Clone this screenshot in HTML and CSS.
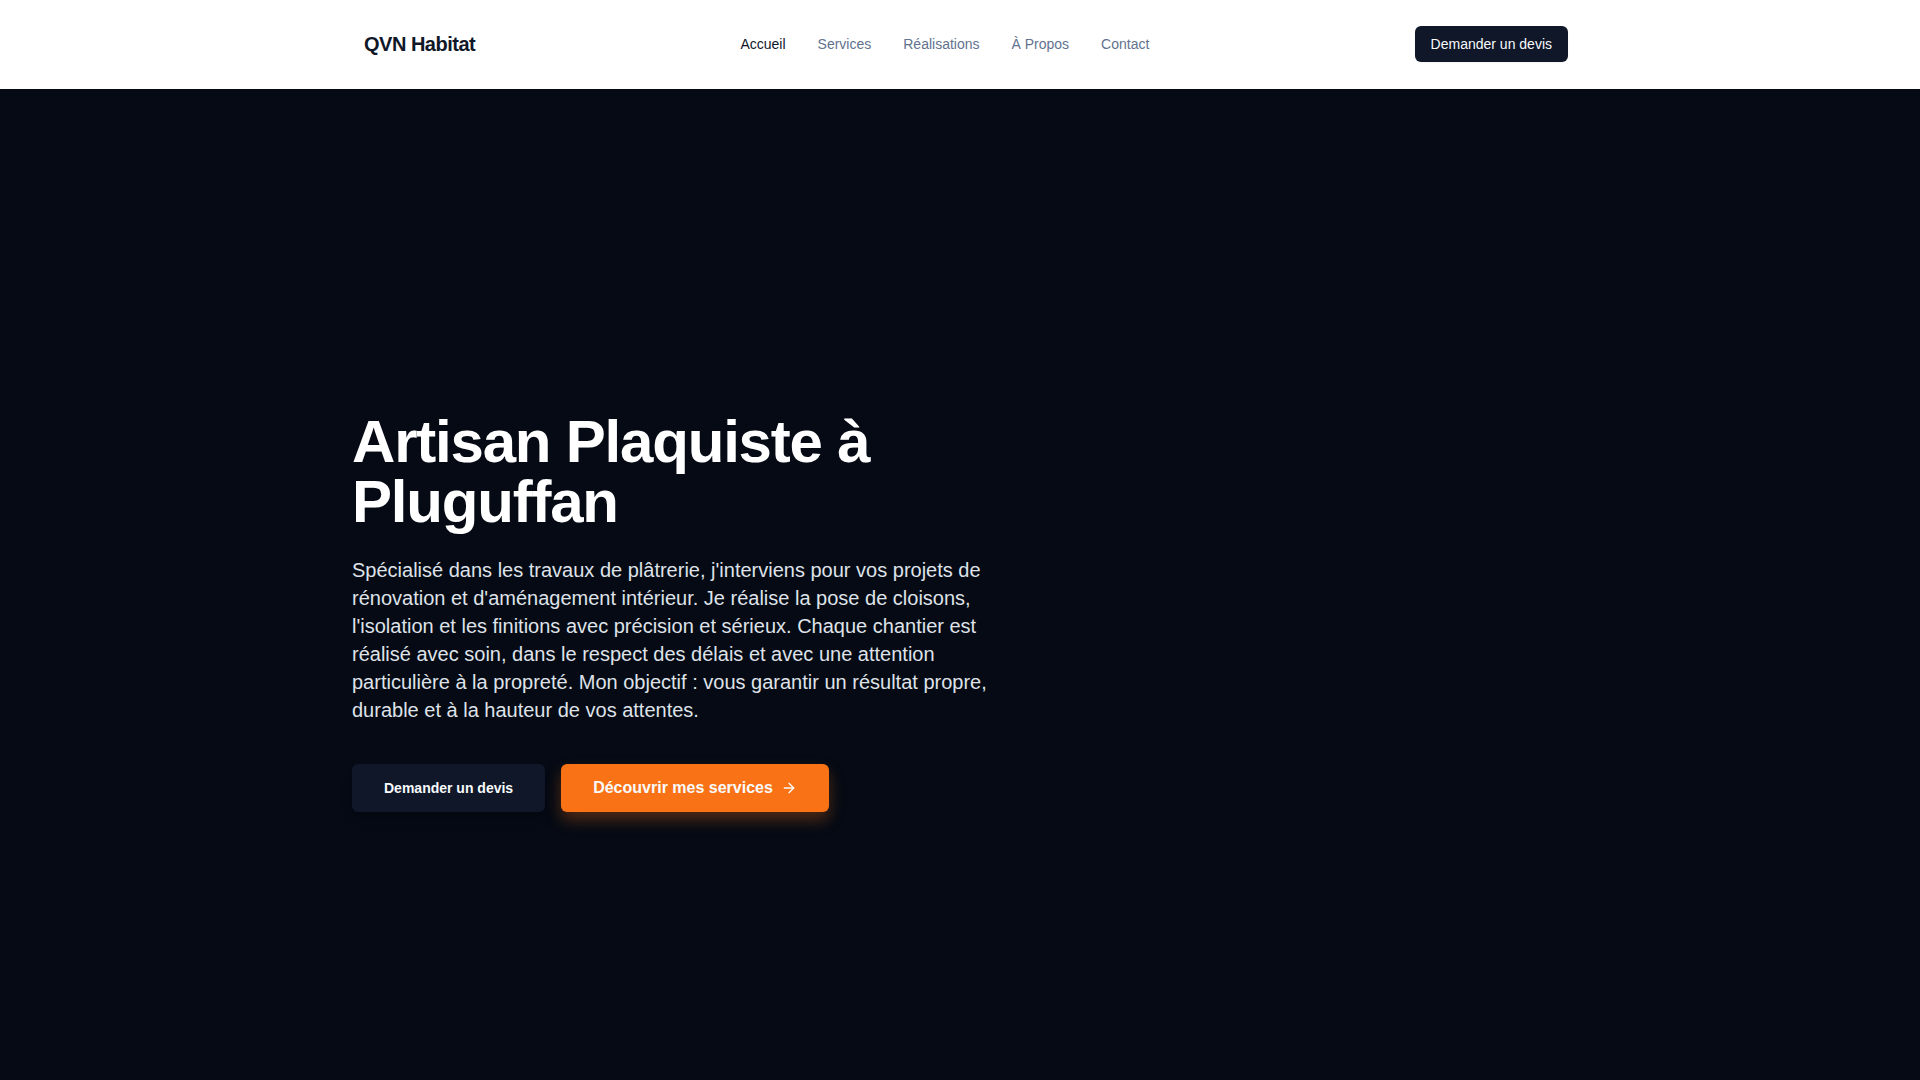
FILE: index.html
```
<!DOCTYPE html>
<html lang="fr">
<head>
  <meta charset="UTF-8">
  <meta name="viewport" content="width=device-width, initial-scale=1">
  <title>QVN Habitat</title>
  <link rel="stylesheet" href="styles.css">
</head>
<body>
  <header class="header">
    <div class="container header-inner">
      <a class="logo" href="#">QVN Habitat</a>
      <nav class="nav">
        <a class="nav-link active" href="#">Accueil</a>
        <a class="nav-link" href="#services">Services</a>
        <a class="nav-link" href="#realisations">Réalisations</a>
        <a class="nav-link" href="#a-propos">À Propos</a>
        <a class="nav-link" href="#contact">Contact</a>
      </nav>
      <button class="btn btn-small" type="button">Demander un devis</button>
    </div>
  </header>

  <main class="hero">
    <div class="container">
      <div class="hero-content">
        <h1 class="hero-title">Artisan Plaquiste à Pluguffan</h1>
        <p class="hero-text">Spécialisé dans les travaux de plâtrerie, j'interviens pour vos projets de rénovation et d'aménagement intérieur. Je réalise la pose de cloisons, l'isolation et les finitions avec précision et sérieux. Chaque chantier est réalisé avec soin, dans le respect des délais et avec une attention particulière à la propreté. Mon objectif : vous garantir un résultat propre, durable et à la hauteur de vos attentes.</p>
        <div class="hero-actions">
          <button class="btn btn-large" type="button">Demander un devis</button>
          <button class="btn btn-large btn-orange" type="button">
            Découvrir mes services
            <svg class="icon" viewBox="0 0 24 24" aria-hidden="true">
              <path d="M5 12h14"/>
              <path d="m12 5 7 7-7 7"/>
            </svg>
          </button>
        </div>
      </div>
    </div>
  </main>
</body>
</html>
```

FILE: styles.css
```
* {
  box-sizing: border-box;
}

body {
  margin: 0;
  min-height: 100vh;
  display: flex;
  flex-direction: column;
  font-family: "Liberation Sans", Arial, sans-serif;
  background-color: #050a14;
  color: #0f1729;
}

.container {
  width: 100%;
  max-width: 1280px;
  margin: 0 auto;
  padding: 0 32px;
}

/* Header */
.header {
  background-color: #fff;
  border-bottom: 1px solid #fff;
}

.header-inner {
  display: flex;
  align-items: center;
  justify-content: space-between;
  min-height: 88px;
}

.logo {
  padding-left: 12px;
  font-size: 20px;
  line-height: 28px;
  font-weight: bold;
  letter-spacing: -0.025em;
  color: #0f1729;
  text-decoration: none;
}

.nav {
  display: flex;
  gap: 32px;
}

.nav-link {
  font-size: 14px;
  line-height: 20px;
  color: #62728f;
  text-decoration: none;
}

.nav-link:hover,
.nav-link.active {
  color: #0f1729;
}

/* Buttons */
.btn {
  display: inline-flex;
  align-items: center;
  justify-content: center;
  gap: 8px;
  border: none;
  border-radius: 6px;
  background-color: #0f1729;
  color: #f8fafc;
  font-family: inherit;
  font-size: 14px;
  line-height: 20px;
  cursor: pointer;
}

.btn-small {
  height: 36px;
  padding: 0 16px;
  box-shadow: 0 1px 2px rgba(0, 0, 0, 0.05);
}

.btn-large {
  height: 48px;
  padding: 0 32px;
  font-weight: bold;
  box-shadow: 0 10px 15px -3px rgba(0, 0, 0, 0.1), 0 4px 6px -4px rgba(0, 0, 0, 0.1);
}

.btn-orange {
  background-color: #f97316;
  font-size: 16px;
  line-height: 24px;
  box-shadow: 0 8px 16px rgba(249, 115, 22, 0.3);
}

.icon {
  width: 16px;
  height: 16px;
  fill: none;
  stroke: currentColor;
  stroke-width: 2;
  stroke-linecap: round;
  stroke-linejoin: round;
}

/* Hero */
.hero {
  flex: 1;
  display: flex;
  align-items: center;
  padding-top: 54px;
}

.hero-content {
  max-width: 672px;
}

.hero-title {
  margin: 0 0 24px;
  font-size: 60px;
  line-height: 60px;
  font-weight: bold;
  letter-spacing: -0.02em;
  color: #fff;
}

.hero-text {
  margin: 0 0 40px;
  font-size: 20px;
  line-height: 28px;
  color: #dfe2e9;
}

.hero-actions {
  display: flex;
  flex-wrap: wrap;
  gap: 16px;
}
```
